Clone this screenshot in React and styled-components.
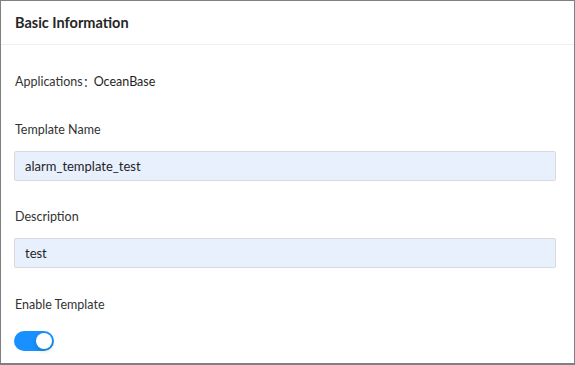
import React, { useState } from "react"
import styled, { createGlobalStyle } from "styled-components"

const Global = createGlobalStyle`
  html, body {
    margin: 0;
    padding: 0;
    background: #ffffff;
  }
  * {
    box-sizing: border-box;
  }
`

const Card = styled.div`
  width: 575px;
  height: 365px;
  border: 1px solid #808080;
  border-bottom-width: 2px;
  background: #ffffff;
  font-family: Lato, "Noto Sans CJK SC", sans-serif;
  color: rgba(0, 0, 0, 0.85);
  overflow: hidden;
`

const Header = styled.div`
  height: 44px;
  padding: 0 14px;
  display: flex;
  align-items: center;
  border-bottom: 1px solid #efefef;
  font-size: 14.5px;
  font-weight: 700;
  color: #262626;
`

const Body = styled.div`
  padding: 25px 13px 0 13px;
  display: flex;
  flex-direction: column;
`

const InfoRow = styled.div`
  height: 22px;
  display: flex;
  align-items: center;
  padding-left: 1px;
  font-size: 12.5px;
  color: #333333;
`

const Colon = styled.span`
  font-family: "Noto Sans CJK SC", sans-serif;
  width: 12px;
  margin-right: -1px;
`

const InfoValue = styled.span`
  color: #1f1f1f;
`

const Field = styled.div`
  display: flex;
  flex-direction: column;
  margin-top: ${p => p.$top}px;
`

const Label = styled.div`
  height: 22px;
  line-height: 24px;
  padding-left: 1px;
  font-size: 12.5px;
  color: #333333;
  margin-bottom: ${p => p.$gap}px;
`

const Input = styled.input`
  width: 542px;
  height: 30px;
  padding: 0 10px;
  border: 1px solid #d9d9d9;
  border-radius: 2px;
  background: #e8f0fe;
  font-family: inherit;
  font-size: 13px;
  color: #1f1f1f;
  outline: none;
`

const SwitchTrack = styled.button`
  width: 40px;
  height: 20px;
  padding: 0;
  border: none;
  border-radius: 10px;
  background: ${p => (p.$on ? "#1890ff" : "#bfbfbf")};
  position: relative;
  cursor: pointer;
`

const SwitchKnob = styled.span`
  position: absolute;
  top: 2px;
  left: ${p => (p.$on ? "22px" : "2px")};
  width: 16px;
  height: 16px;
  border-radius: 50%;
  background: #ffffff;
  box-shadow: 0 2px 4px rgba(0, 35, 11, 0.2);
  transition: left 0.2s;
`

function App() {
  const [name, setName] = useState("alarm_template_test")
  const [desc, setDesc] = useState("test")
  const [enabled, setEnabled] = useState(true)

  return (
    <>
      <Global />
      <Card>
        <Header>Basic Information</Header>
        <Body>
          <InfoRow>
            Applications<Colon>：</Colon>
            <InfoValue>OceanBase</InfoValue>
          </InfoRow>

          <Field $top={26}>
            <Label $gap={11}>Template Name</Label>
            <Input value={name} onChange={e => setName(e.target.value)} />
          </Field>

          <Field $top={24}>
            <Label $gap={11}>Description</Label>
            <Input value={desc} onChange={e => setDesc(e.target.value)} />
          </Field>

          <Field $top={25}>
            <Label $gap={16}>Enable Template</Label>
            <SwitchTrack $on={enabled} onClick={() => setEnabled(!enabled)}>
              <SwitchKnob $on={enabled} />
            </SwitchTrack>
          </Field>
        </Body>
      </Card>
    </>
  )
}

export default App
